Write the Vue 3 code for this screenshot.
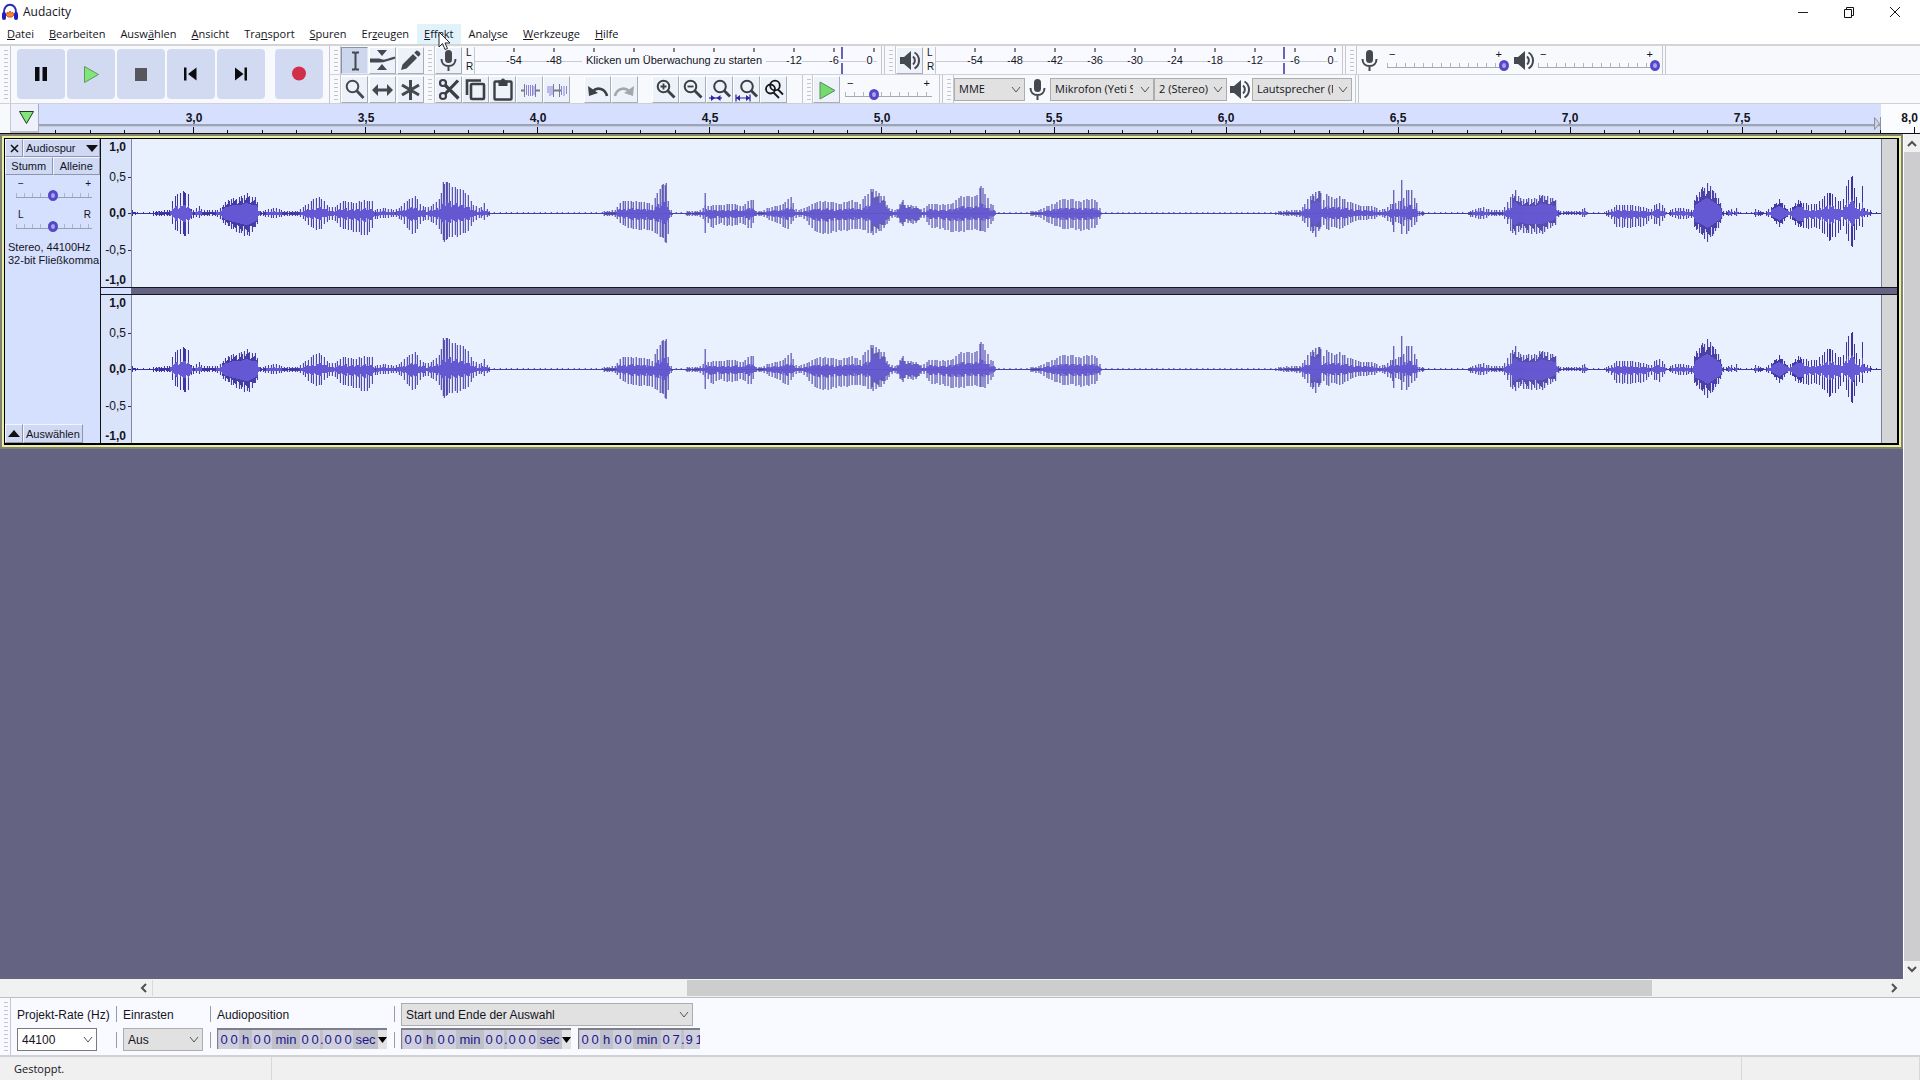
<script setup>
import { ref } from 'vue'

const menus = [
  ['', 'D', 'atei'], ['', 'B', 'earbeiten'], ['Ausw', 'ä', 'hlen'], ['', 'A', 'nsicht'],
  ['Tra', 'n', 'sport'], ['', 'S', 'puren'], ['Er', 'z', 'eugen'], ['', 'E', 'ffekt'],
  ['Anal', 'y', 'se'], ['', 'W', 'erkzeuge'], ['', 'H', 'ilfe'],
]

const mic = '<rect x="9" y="2" width="7" height="13" rx="3.5" fill="#45484f"/><path d="M5.5 11c0 4.500 3 7 7 7s7-2.500 7-7M12.500 18v5" fill="none" stroke="#45484f" stroke-width="2"/>'
const speaker = '<path d="M3 9h4l7-6v19l-7-6H3z" fill="#45484f"/><path d="M16 8.500c2.500 2 2.500 6 0 8M17.500 4.500c6 3.500 6 12.500 0 16" fill="none" stroke="#45484f" stroke-width="2"/>'
const lens = '<circle cx="10.500" cy="9.500" r="5.800" fill="none" stroke="#3c3f46" stroke-width="2"/><path d="M14.500 13.500l7 7" stroke="#3c3f46" stroke-width="2.800"/>'
const lensRight = '<circle cx="13" cy="9.500" r="5.800" fill="none" stroke="#3c3f46" stroke-width="2"/><path d="M17 13.500l6 6" stroke="#3c3f46" stroke-width="2.800"/>'
const icons = {
  mic,
  speaker,
  ibeam: '<path d="M10 4.500h2.500l1 1 1-1H17M10 21.500h2.500l1-1 1 1H17M13.500 5.500v15" fill="none" stroke="#45484f" stroke-width="2"/>',
  envelope: '<path d="M7 2h10l-5 6zM7 22h10l-5-6z" fill="#45484f"/><path d="M0 13.500h9c6 0 8-2 16-4M0 11.500h9l5 1.500" fill="none" stroke="#45484f" stroke-width="2.200"/>',
  pencil: '<path d="M3 22l1.500-5.500L15 6l4 4L8.500 20.500zM16.300 4.700l2-2c1-1 5 2.500 4 4l-2 2z" fill="#45484f"/>',
  magnify: '<circle cx="10.500" cy="9.500" r="5.800" fill="none" stroke="#45484f" stroke-width="2"/><path d="M14.500 13.500l7 7.500" stroke="#45484f" stroke-width="2.800"/>',
  shift: '<path d="M7 13h12" stroke="#45484f" stroke-width="3"/><path d="M2 13l6-6v12zM23 13l-6-6v12z" fill="#45484f"/>',
  multi: '<path d="M12.500 3v20M4 8l17 10M21 8L4 18" stroke="#45484f" stroke-width="3"/>',
  cut: '<g fill="none" stroke="#3c3f46" stroke-width="2.200"><circle cx="7" cy="6" r="3"/><circle cx="7" cy="19" r="3"/></g><path d="M9 8l13.500 13.500M9 17L22 3.500" stroke="#3c3f46" stroke-width="3.200"/>',
  copy: '<rect x="8" y="7" width="13" height="15" rx="1" fill="none" stroke="#3c3f46" stroke-width="2.600"/><path d="M4 18V3.500h14" fill="none" stroke="#3c3f46" stroke-width="2.600"/>',
  paste: '<rect x="4.500" y="4.500" width="17" height="18" rx="1" fill="none" stroke="#3c3f46" stroke-width="2.400"/><path d="M8.500 3.500h2.500a2 2 0 0 1 4 0h2.500V9h-9z" fill="#3c3f46"/>',
  trim: '<path d="M4 13.500h4M18 13.500h5" stroke="#777b88" stroke-width="2"/><path d="M7.500 7v13M18.500 7v13" stroke="#777b88"/><path d="M9.500 18V8M11.500 8v11M13.500 19V8M15.500 8v11M17 18V9" stroke="#8b82de"/>',
  silence: '<path d="M9 13.500h8" stroke="#777b88" stroke-width="2"/><path d="M9.500 7v13M15.500 7v13" stroke="#777b88"/><path d="M4 16V9M6 9v10M8 18V9M17.500 9v9M20 19V9M22.500 9v8" stroke="#8b82de"/>',
  undo: '<path d="M8 14c4-4 12-3 14 5" fill="none" stroke="#3c3f46" stroke-width="2.600"/><path d="M3 9l1 10 9-3z" fill="#3c3f46"/>',
  redo: '<path d="M17 14c-4-4-12-3-14 5" fill="none" stroke="#a4a6ac" stroke-width="2.600"/><path d="M22 9l-1 10-9-3z" fill="#a4a6ac"/>',
  zoomIn: lens + '<path d="M7.500 9.500h6M10.500 6.500v6" stroke="#3c3f46" stroke-width="1.800"/>',
  zoomOut: lens + '<path d="M7.500 9.500h6" stroke="#3c3f46" stroke-width="1.800"/>',
  zoomSel: lensRight + '<path d="M2 21h13" stroke="#2a259c" stroke-width="1.200"/><path d="M8 21l-4-3v6zM9.500 21l4-3v6z" fill="#2a259c"/>',
  zoomFit: lensRight + '<path d="M2 21h14M2 17.500v7M16 17.500v7" stroke="#2a259c" stroke-width="1.200"/><path d="M2 21l4-3v6zM16 21l-4-3v6z" fill="#2a259c"/>',
  zoomToggle: '<g fill="none" stroke="#15161a" stroke-width="1.800"><circle cx="14" cy="8.500" r="4.800"/><path d="M17 12.500l5 5"/><circle cx="9.500" cy="12" r="4.500"/><path d="M12.500 15.500l5.500 5.500"/></g>',
  play: '<path d="M6 5l15 8.500L6 22z" fill="#74dc6c" stroke="#5a8a5a"/>',
}

const transport = [
  { name: 'Pause', art: '<path d="M18 18h4.500v14H18zM25.500 18H30v14h-4.500z" fill="#0c0c10"/>' },
  { name: 'Wiedergabe', art: '<path d="M17.500 17.500l14 8-14 8z" fill="#84e47c" stroke="#5c9a5c"/>' },
  { name: 'Stopp', art: '<path d="M18 19h12v13H18z" fill="#55575c"/>' },
  { name: 'Zum Anfang', art: '<path d="M17 18.500h2.500v13H17zM29.500 18.500v13l-8.500-6.500z" fill="#0c0c10"/>' },
  { name: 'Zum Ende', art: '<path d="M27.500 18.500H30v13h-2.500zM18 18.500v13l8.500-6.500z" fill="#0c0c10"/>' },
  { name: 'Aufnahme', art: '<circle cx="24" cy="24.500" r="7" fill="#d0304a"/>' },
]

const toolRows = [
  [['ibeam', 'Auswahl'], ['envelope', 'Hüllkurve'], ['pencil', 'Zeichnen']],
  [['magnify', 'Zoom'], ['shift', 'Verschieben'], ['multi', 'Multi-Werkzeug']],
]
const editGroups = [
  [['cut', 'Ausschneiden'], ['copy', 'Kopieren'], ['paste', 'Einfügen'], ['trim', 'Zuschneiden'], ['silence', 'Stille']],
  [['undo', 'Rückgängig'], ['redo', 'Wiederherstellen']],
  [['zoomIn', 'Vergrößern'], ['zoomOut', 'Verkleinern'], ['zoomSel', 'Auswahl einpassen'], ['zoomFit', 'Projekt einpassen'], ['zoomToggle', 'Zoom umschalten']],
]

const meterTicks = Array.from({ length: 10 }, (_, i) => `M${39 + i * 40} 1v4`).join('')
const playLevels = [-54, -48, -42, -36, -30, -24, -18, -12, -6]

const seconds = ['3,0', '3,5', '4,0', '4,5', '5,0', '5,5', '6,0', '6,5', '7,0', '7,5', '8,0']
// Ruler ticks: a long one every half second, four short ones between.
let ticks = ''
for (let i = -4; i <= 50; i++) {
  const x = Math.round(154 + i * 34.42)
  ticks += i % 5 === 0 ? `M${x} 0v6` : `M${x} 3v3`
}

const scale = ['1,0', '0,5', '0,0', '-0,5', '-1,0']

// Peak envelope: position, height above and depth below the zero line.
const peaks = [
  0,3,2, 4,1,1, 16,1,1, 24,2,2, 25,2,2, 26,11,7, 27,2,2, 37,3,2, 40,12,10, 44,18,18, 52,22,21, 56,19,20, 59,4,5, 62,2,3, 66,8,4, 70,3,2, 83,3,2, 87,4,4, 93,11,11, 100,15,15, 106,15,18, 114,20,22, 118,17,20, 124,15,13, 126,8,7, 128,2,2, 143,5,4, 153,2,2, 166,2,2,
  171,6,5, 178,11,13, 184,15,16, 188,16,16, 193,11,9, 198,5,5, 203,6,7, 210,12,15, 223,10,17, 233,13,22, 240,11,15, 243,3,5, 250,5,4, 263,3,3, 268,6,5, 274,11,13, 282,18,21, 289,8,8, 295,5,5, 303,10,10, 308,15,16, 311,30,27, 314,32,25, 320,27,22, 328,24,21, 336,18,17, 341,8,8, 348,4,3, 352,10,6, 356,2,2, 363,1,1,
  468,1,1, 483,3,3, 488,11,9, 494,12,13, 503,12,15, 516,10,16, 521,8,16, 524,18,20, 530,28,23, 534,31,28, 536,12,20, 538,4,4, 541,1,2, 565,2,2, 570,4,4, 572,6,6, 573,21,18, 575,7,8, 580,8,14, 588,8,9, 596,9,12, 604,9,11, 610,6,8, 618,14,16, 621,13,9, 624,2,2, 630,2,2, 638,6,6, 648,8,10, 656,13,16, 659,16,10, 663,4,4, 668,3,3,
  673,5,5, 680,9,14, 688,12,20, 698,11,19, 708,9,16, 718,13,16, 728,10,14, 736,20,18, 741,26,20, 748,18,17, 752,17,14, 756,6,8, 761,3,3, 766,4,4, 770,15,14, 773,8,8, 783,7,10, 790,3,3, 794,6,6, 798,10,13, 813,8,15, 821,10,18, 830,18,17, 838,16,16, 844,17,15, 849,27,17, 854,18,18, 859,9,10, 862,8,6, 864,1,1,
  893,1,1, 908,3,3, 915,7,8, 923,10,11, 930,14,15, 938,14,14, 948,12,16, 958,14,15, 964,13,13, 967,6,7, 970,1,1, 1128,1,1, 1138,1,1, 1161,3,2, 1168,3,3, 1172,8,8, 1178,16,16, 1184,22,22, 1188,21,15, 1192,13,11, 1195,18,16, 1203,15,12, 1208,16,16, 1216,12,10, 1226,8,6, 1243,6,5, 1247,3,2, 1253,4,4, 1258,8,8, 1261,10,10, 1262,24,17, 1263,10,8, 1269,12,10, 1270,33,20, 1271,12,10, 1275,24,19, 1280,22,14, 1285,10,8, 1287,2,2, 1298,1,1,
  1335,1,1, 1343,4,4, 1352,6,5, 1358,3,2, 1371,3,2, 1375,9,8, 1380,18,18, 1384,22,22, 1388,15,16, 1396,14,20, 1404,14,19, 1410,19,20, 1416,16,16, 1424,14,10, 1427,3,3, 1429,2,1, 1448,2,1, 1454,6,4, 1456,1,1, 1473,1,1, 1480,4,5, 1485,8,13, 1498,8,14, 1513,6,12, 1519,3,4, 1523,8,10, 1528,11,11, 1534,4,3, 1536,1,1, 1543,5,4, 1553,5,5, 1560,3,4,
  1564,16,16, 1570,24,20, 1576,30,28, 1582,22,20, 1588,14,12, 1591,3,3, 1594,1,1, 1599,5,3, 1602,1,1, 1605,5,2, 1608,1,1, 1622,1,1, 1624,4,3, 1633,1,1, 1640,6,4, 1648,14,13, 1656,4,3, 1661,6,6, 1666,13,13, 1676,9,14, 1686,9,14, 1691,15,18, 1698,21,26, 1704,17,22, 1708,10,18, 1712,14,12, 1717,34,26, 1721,36,34, 1725,16,16, 1729,8,12, 1731,28,13, 1733,5,3, 1738,4,2, 1741,1,1, 1749,1,1,
]
// Stretches where the peaks lie so close that they merge.
const dense = [[90, 125], [766, 788], [740, 756], [1180, 1188], [1382, 1424], [1564, 1590], [1640, 1656], [1661, 1672]]

function buildWave() {
  let outer = ''
  let core = ''
  let k = 0
  for (let x = 0; x < 1750; x++) {
    while (k + 5 < peaks.length && peaks[k + 3] <= x) k += 3
    const last = k + 3 >= peaks.length
    const f = last ? 0 : (x - peaks[k]) / (peaks[k + 3] - peaks[k])
    const up = last ? 1 : peaks[k + 1] + f * (peaks[k + 4] - peaks[k + 1])
    const down = last ? 1 : peaks[k + 2] + f * (peaks[k + 5] - peaks[k + 2])
    const packed = dense.some(([a, b]) => x >= a && x <= b)
    const noise = ((x * 7919) % 13) / 13
    const crest = x % 8 === 0 || x % 8 === 3 || x % 8 === 5 || (up > 20 && f === 0)
    const low = packed ? 0.55 + noise * 0.35 : 0.2 + noise * 0.22
    const top = Math.round(up * (crest ? 0.94 + noise * 0.12 : low))
    const bottom = Math.round(down * (crest ? 1.06 - noise * 0.12 : low))
    const flat = up < 1.5
    outer += flat ? (x * 31) % 17 < 3 ? `M${x} 73v2` : `M${x} 74v1` : `M${x} ${74 - top}v${top + bottom + 1}`
    if (up > 3) {
      const a = Math.min(top, Math.round(up * (packed ? 0.5 : 0.38)))
      const b = Math.min(bottom, Math.round(down * (packed ? 0.5 : 0.38)))
      core += `M${x} ${74 - a}v${a + b + 1}`
    }
  }
  return { outer, core }
}
const wave = buildWave()

const stamp = (sec) => [
  ['0', 'd'], ['0', 'd'], ['h', 'h'], ['0', 'd'], ['0', 'd'], ['min', 'm'],
  [sec[0], 'd'], [sec[1], 'd'], ['.', 'p'], [sec[2], 'd'], [sec[3], 'd'], [sec[4], 'd'], ['sec', 's'],
]
const position = stamp('00000')
const start = stamp('00000')
const end = stamp('07910').slice(0, 11)

const speed = ref(31)
const recVol = ref(100)
const playVol = ref(100)
const gain = ref(48)
const pan = ref(48)
const rate = ref('44100')
</script>

<template>
  <div class="app">
    <header class="title">
      <svg class="logo" width="18" height="18" viewBox="0 0 18 18">
        <path d="M3 10C2 -1 16 -1 15 10" fill="none" stroke="#2a2ab4" stroke-width="2" />
        <path d="M5 12l1.500-3 1 1.500L9 8l1.500 2.500 1-1.500 1.500 3-2 2H7z" fill="#f08a28" stroke="#d8502a" />
        <rect x="1" y="9" width="4" height="8" rx="2" fill="#2020c0" /><rect x="13" y="9" width="4" height="8" rx="2" fill="#2020c0" />
      </svg>
      <h1>Audacity</h1>
      <div class="window-buttons">
        <button aria-label="Minimieren"><svg width="12" height="12"><path d="M1 6.500h10" stroke="#222" /></svg></button>
        <button aria-label="Wiederherstellen"><svg width="12" height="12" fill="none" stroke="#111"><path d="M1.500 3.500h7v8h-7zM3.500 3.500v-2h7v8h-2" /></svg></button>
        <button aria-label="Schließen"><svg width="12" height="12"><path d="M1 1l10 10M11 1L1 11" stroke="#111" /></svg></button>
      </div>
    </header>

    <nav class="menu">
      <button v-for="m in menus" :key="m.join('')" :class="{ hover: m[2] === 'ffekt' }">{{ m[0] }}<u>{{ m[1] }}</u>{{ m[2] }}<svg v-if="m[2] === 'ffekt'" class="pointer" width="13" height="20" viewBox="0 0 13 20"><path d="M1 1v15l3.500-3.500L7 18.500l2.500-1L7 12h5z" fill="#fff" stroke="#222230" /></svg></button>
    </nav>

    <div class="toolbars">
      <section class="transport">
        <i class="grip"></i>
        <div class="transport-buttons">
          <button v-for="b in transport" :key="b.name" :aria-label="b.name"><svg width="48" height="50" v-html="b.art"></svg></button>
        </div>
      </section>
      <section class="tools">
        <div v-for="(row, r) in toolRows" :key="r" class="bar">
          <i class="grip"></i>
          <div class="tool-row">
            <button v-for="(t, i) in row" :key="t[0]" class="tool" :class="{ on: r === 0 && i === 0 }" :aria-label="t[1]"><svg width="25" height="25" v-html="icons[t[0]]"></svg></button>
          </div>
        </div>
      </section>
      <section class="stack">
        <div class="bar">
          <i class="grip"></i>
          <button class="tool" aria-label="Aufnahmepegel"><svg width="25" height="25" v-html="icons.mic"></svg></button>
          <div class="lr"><span>L</span><span>R</span></div>
          <div class="meter">
            <svg class="meter-ticks" width="402" height="6"><path :d="meterTicks" stroke="#111" /></svg>
            <div class="levels">
              <span class="level"><b>-54</b></span><span class="level"><b>-48</b></span>
              <span class="message"><b>Klicken um Überwachung zu starten</b></span>
              <span class="level"><b>-12</b></span><span class="level"><b>-6</b></span><span class="level zero"><b>0</b></span>
            </div>
            <i class="peak"></i>
          </div>
          <i class="end"></i>
          <i class="grip"></i>
          <button class="tool" aria-label="Wiedergabepegel"><svg width="25" height="25" v-html="icons.speaker"></svg></button>
          <div class="lr"><span>L</span><span>R</span></div>
          <div class="meter">
            <svg class="meter-ticks" width="402" height="6"><path :d="meterTicks" stroke="#111" /></svg>
            <div class="levels">
              <span v-for="l in playLevels" :key="l" class="level"><b>{{ l }}</b></span><span class="level zero"><b>0</b></span>
            </div>
            <i class="peak play"></i>
          </div>
          <i class="end"></i>
          <i class="grip"></i>
          <svg class="glyph wide" width="25" height="25" v-html="icons.mic"></svg>
          <label class="slider volume"><span class="signs"><span>−</span><span>+</span></span><input v-model="recVol" type="range" aria-label="Aufnahmelautstärke" /></label>
          <svg class="glyph" width="25" height="25" v-html="icons.speaker"></svg>
          <label class="slider volume"><span class="signs"><span>−</span><span>+</span></span><input v-model="playVol" type="range" aria-label="Wiedergabelautstärke" /></label>
          <i class="end"></i>
        </div>
        <div class="bar">
          <i class="grip"></i>
          <div v-for="(g, n) in editGroups" :key="n" class="edit-group">
            <button v-for="t in g" :key="t[0]" class="tool" :aria-label="t[1]"><svg width="25" height="25" v-html="icons[t[0]]"></svg></button>
          </div>
          <i class="grip edge"></i>
          <button class="tool" aria-label="Mit Geschwindigkeit abspielen"><svg width="25" height="25" v-html="icons.play"></svg></button>
          <label class="slider speed"><span class="signs"><span>−</span><span>+</span></span><input v-model="speed" type="range" aria-label="Geschwindigkeit" /></label>
          <i class="end"></i>
          <i class="grip"></i>
          <span class="combo host"><select aria-label="Audio-Host"><option>MME</option></select><svg width="10" height="6"><path d="M1 0l4 5 4-5" /></svg></span>
          <svg class="glyph" width="25" height="25" v-html="icons.mic"></svg>
          <span class="combo input"><select aria-label="Aufnahmegerät"><option>Mikrofon (Yeti Stereo Microphone)</option></select><svg width="10" height="6"><path d="M1 0l4 5 4-5" /></svg></span>
          <span class="combo channels"><select aria-label="Aufnahmekanäle"><option>2 (Stereo)</option></select><svg width="10" height="6"><path d="M1 0l4 5 4-5" /></svg></span>
          <svg class="glyph" width="25" height="25" v-html="icons.speaker"></svg>
          <span class="combo output"><select aria-label="Wiedergabegerät"><option>Lautsprecher (Realtek Audio)</option></select><svg width="10" height="6"><path d="M1 0l4 5 4-5" /></svg></span>
          <i class="end"></i>
        </div>
      </section>
    </div>

    <div class="ruler">
      <div class="ruler-edge"></div>
      <button class="pin" aria-label="Abspielposition anheften"><svg width="17" height="15"><path d="M1.500 1.500h14l-7 12z" fill="#84e47c" stroke="#1c3c1c" /></svg></button>
      <div class="timeline">
        <div class="region"><svg width="7" height="13"><path d="M.5.5l5 6-5 6zM6.500 0v13" fill="#cdd3dc" stroke="#8a90a0" /></svg></div>
        <div class="tail"></div>
        <div class="marks"><span v-for="s in seconds" :key="s">{{ s }}</span></div>
        <svg class="ticks" width="100%" height="6"><path :d="ticks" transform="translate(0.5 0)" stroke="#111" /></svg>
      </div>
    </div>

    <main class="workspace">
      <div class="tracks">
        <div class="ring">
          <article class="track">
            <aside class="panel">
              <div class="head">
                <button class="close" aria-label="Spur schließen"><svg width="9" height="9"><path d="M1 1l7 7M8 1L1 8" stroke="#111" stroke-width="1.500" /></svg></button>
                <button class="name">Audiospur<svg width="12" height="7"><path d="M0 0h12l-6 7z" fill="#111" /></svg></button>
              </div>
              <div class="head"><button class="half">Stumm</button><button class="half">Alleine</button></div>
              <label class="slider track-slider"><span class="signs"><span>−</span><span>+</span></span><input v-model="gain" type="range" aria-label="Verstärkung" /></label>
              <label class="slider track-slider"><span class="signs"><span>L</span><span>R</span></span><input v-model="pan" type="range" aria-label="Panorama" /></label>
              <p>Stereo, 44100Hz<br />32-bit Fließkomma</p>
              <div class="foot">
                <button class="close" aria-label="Spur einklappen"><svg width="12" height="7"><path d="M0 7h12L6 0z" fill="#111" /></svg></button>
                <button class="select">Auswählen</button>
              </div>
            </aside>
            <div class="channels-view">
              <div v-for="c in 2" :key="c" class="channel">
                <div class="scale"><span v-for="(v, i) in scale" :key="v" :class="['v' + i]">{{ v }}</span></div>
                <div class="clip">
                  <svg width="100%" height="148" viewBox="0 0 1750 148" preserveAspectRatio="none" shape-rendering="crispEdges" fill="none">
                    <path d="M0 74.500h1750" stroke="#7b7cc4" />
                    <g transform="translate(0.5 0)"><path :d="wave.outer" stroke="#3a2fa0" /><path :d="wave.core" stroke="#685bd8" /></g>
                  </svg>
                </div>
                <div class="after"></div>
              </div>
            </div>
          </article>
        </div>
      </div>
      <div class="vscroll">
        <svg width="10" height="7"><path d="M1 6l4-4 4 4" /></svg>
        <div class="vthumb"></div>
        <svg width="10" height="7"><path d="M1 1l4 4 4-4" /></svg>
      </div>
    </main>

    <div class="hscroll">
      <svg width="7" height="10"><path d="M6 1L2 5l4 4" /></svg>
      <div class="htrack"><div class="hthumb"></div></div>
      <svg width="7" height="10"><path d="M1 1l4 4-4 4" /></svg>
    </div>

    <section class="selection">
      <i class="grip"></i>
      <div class="col rate"><label for="rate">Projekt-Rate (Hz)</label><span class="combo white"><input id="rate" v-model="rate" type="text" /><svg width="10" height="6"><path d="M1 0l4 5 4-5" /></svg></span></div>
      <div class="rules"><i></i><i></i></div>
      <div class="col snap"><label for="snap">Einrasten</label><span class="combo"><select id="snap"><option>Aus</option></select><svg width="10" height="6"><path d="M1 0l4 5 4-5" /></svg></span></div>
      <div class="rules"><i></i><i></i></div>
      <div class="col position"><span class="caption">Audioposition</span>
        <div class="time"><span v-for="(p, i) in position" :key="i" :class="p[1]">{{ p[0] }}</span><button aria-label="Format"><svg width="9" height="6"><path d="M0 0h9L4.500 6z" /></svg></button></div>
      </div>
      <div class="rules"><i></i><i></i></div>
      <div class="col range">
        <span class="combo"><select aria-label="Auswahlart"><option>Start und Ende der Auswahl</option></select><svg width="10" height="6"><path d="M1 0l4 5 4-5" /></svg></span>
        <div class="pair">
          <div class="time"><span v-for="(p, i) in start" :key="i" :class="p[1]">{{ p[0] }}</span><button aria-label="Format"><svg width="9" height="6"><path d="M0 0h9L4.500 6z" /></svg></button></div>
          <div class="time cut"><span v-for="(p, i) in end" :key="i" :class="p[1]">{{ p[0] }}</span></div>
        </div>
      </div>
    </section>

    <footer class="status"><span class="state">Gestoppt.</span><span class="info"></span><span class="last"></span></footer>
  </div>
</template>

<style>
body { margin: 0; }
</style>

<style scoped>
* { box-sizing: border-box; }
.app { min-height: 100vh; display: flex; flex-direction: column; background: #fff; color: #14141c; font: 11px/14px "Open Sans", sans-serif; overflow: hidden; }
button, select, input { font: inherit; color: inherit; margin: 0; padding: 0; border: 0; background: none; }
svg { display: block; flex: none; }

.title { display: flex; align-items: center; height: 23px; padding: 0 2px 0 1px; }
.title h1 { margin: 0 auto 0 4px; font-size: 12px; font-weight: 400; }
.window-buttons { display: flex; }
.window-buttons button { width: 46px; height: 22px; display: grid; place-items: center; }
.menu { display: flex; height: 21px; align-items: center; gap: 1px; }
.menu button { position: relative; height: 20px; padding: 0 7px; white-space: nowrap; }
.menu .hover { background: #e2f2fa; }
.pointer { position: absolute; left: 21px; top: 7px; z-index: 3; }

.toolbars { display: flex; height: 60px; border-top: 2px solid #d3d4d6; background: #f8f9fd; }
.grip { flex: none; width: 11px; align-self: stretch; border-right: 1px solid #c6c8d0; background: repeating-linear-gradient(#c4c6cc 0 1px, transparent 1px 4px) 4px 4px / 4px calc(100% - 6px) no-repeat; }
.grip.edge { border-left: 1px solid #c6c8d0; margin-left: 15px; }
.transport { flex: none; display: flex; border-right: 1px solid #c6c8d0; border-bottom: 1px solid #cfd1d8; }
.transport-buttons { display: flex; gap: 2px; padding: 3px 6px 4px 6px; }
.transport-buttons button { width: 48px; height: 50px; border-radius: 4px; background: #d1daf0; }
.transport-buttons button:last-child { margin-left: 8px; }
.tools { flex: none; }
.stack { flex: 1; min-width: 0; }
.bar { display: flex; align-items: center; height: 29px; border-bottom: 1px solid #cfd1d8; }
.tool-row { display: flex; gap: 1px; }
.edit-group { display: flex; flex: none; }
.edit-group + .edit-group { margin-left: 14px; }
.tool { flex: none; width: 27px; height: 27px; border: 1px solid; border-color: #fff #a9adb8 #a9adb8 #fff; background: #edf1fa; }
.tool.on { background: #ccd6ec; border-color: #8c93a8 #e4e8f4 #e4e8f4 #8c93a8; }
.lr { flex: none; width: 12px; padding-left: 4px; font: 10px/14px "Liberation Sans", sans-serif; display: flex; flex-direction: column; }
.meter { position: relative; flex: none; width: 403px; height: 27px; margin-right: 4px; border-left: 1px solid #c6c8d0; background: linear-gradient(#c9cbd2, #c9cbd2) 0 14px / 100% 1px no-repeat #f9faff; }
.meter-ticks { position: absolute; left: 0; top: 0; }
.levels { display: flex; align-items: center; height: 27px; padding-left: 19px; font: 11px/14px "Liberation Sans", sans-serif; white-space: nowrap; }
.levels b { font-weight: 400; background: #f9faff; }
.level { width: 40px; text-align: center; flex: none; }
.level.zero { width: 23px; padding-left: 8px; }
.message { flex: 1; text-align: center; }
.message b { padding: 0 4px; }
.peak { position: absolute; left: 366px; top: 0; width: 2px; height: 27px; background: linear-gradient(#6c61b8 0 12px, transparent 12px 16px, #6c61b8 16px); }
.peak.play { left: 347px; }
.end { flex: none; width: 4px; align-self: stretch; border: solid #c6c8d0; border-width: 0 1px; }
.glyph { width: 25px; }
.glyph.wide { width: 28px; }

.slider { flex: none; display: flex; flex-direction: column; }
.signs { display: flex; justify-content: space-between; font: 11px/10px "Liberation Sans", sans-serif; padding: 0 2px; }
.slider input { appearance: none; width: 100%; height: 13px; background: linear-gradient(#a6a8ae, #a6a8ae) 0 8px / 100% 1px no-repeat, repeating-linear-gradient(90deg, #b4b6bc 0 1px, transparent 1px 9px) 0 4px / 100% 4px no-repeat; }
.slider input::-webkit-slider-thumb { appearance: none; width: 10px; height: 11px; border-radius: 50%; border: 3px solid #5548c8; background: #a9a4ee; }
.volume { width: 122px; margin: 0 2px; }
.volume .signs { padding-right: 7px; }
.volume input { background-size: 116px 1px, 116px 4px; }
.speed { width: 87px; margin: 0 7px 0 5px; }

.combo { position: relative; flex: none; display: block; height: 23px; }
.combo select, .combo input { appearance: none; display: block; width: 100%; height: 100%; padding: 0 20px 0 4px; border: 1px solid #adadad; border-radius: 0; background: #e1e1e1; }
.combo svg { position: absolute; right: 4px; top: 9px; fill: none; stroke: #555; pointer-events: none; }
.combo.white input { background: #fff; border-color: #7a7a7a; }
.host { width: 71px; }
.input { width: 104px; }
.channels { width: 73px; }
.channels select { padding-right: 12px; }
.output { width: 100px; margin-right: 3px; }
.output select { padding-right: 18px; }

.ruler { display: flex; height: 30px; background: #f8f9fd; border-bottom: 1px solid #111; }
.ruler-edge { width: 11px; border-right: 1px solid #c6c8d0; }
.pin { width: 28px; padding-left: 7px; border-right: 1px solid #a9adb8; border-bottom: 2px solid #b8bcc8; background: #eef1fb; }
.timeline { flex: 1; position: relative; display: flex; overflow: hidden; }
.region { flex: 1; display: flex; justify-content: flex-end; align-items: flex-end; padding-bottom: 3px; background: linear-gradient(transparent 20px, #9aa3b8 20px 22px, #c3cbdf 22px 23px, #d3dcf4 23px) #d6e0fe; }
.tail { width: 39px; background: #fbfcff; }
.marks { position: absolute; left: 69px; right: 0; top: 7px; display: flex; font: 700 12px/14px "Liberation Sans", sans-serif; }
.marks span { flex: none; width: 172px; text-align: center; }
.marks span:last-child { flex: 1; width: auto; text-align: right; padding-right: 2px; }
.ticks { position: absolute; left: 0; bottom: 0; }

.workspace { flex: 1; display: flex; background: #646482; }
.tracks { flex: 1; min-width: 0; }
.ring { border: 2px solid #808274; background: #eceea2; padding: 2px; }
.track { display: flex; border: 1px solid #000; border-right-width: 2px; border-bottom-width: 2px; background: #646482; }
.panel { width: 96px; display: flex; flex-direction: column; border-right: 1px solid #111; background: #d5dffe; font: 11px/12px "Liberation Sans", sans-serif; }
.head { display: flex; height: 18px; }
.head button, .foot button { border: 1px solid; border-color: #f2f5ff #8f96ac #8f96ac #f2f5ff; background: #cfd9f3; }
.close { width: 18px; display: grid; place-items: center; }
.name { flex: 1; display: flex; align-items: center; justify-content: space-between; padding: 0 1px 0 2px; }
.half { flex: 1; }
.track-slider { width: 77px; margin: 4px 0 0 11px; }
.track-slider .signs { font-size: 10px; }
.track-slider + .track-slider { margin-top: 8px; }
.track-slider input { background: linear-gradient(#9a9fae, #9a9fae) 0 8px / 76px 1px no-repeat, repeating-linear-gradient(90deg, #aeb4c4 0 1px, transparent 1px 8px) 0 4px / 76px 4px no-repeat; }
.panel p { margin: 8px 0 0 3px; line-height: 13px; white-space: nowrap; }
.foot { display: flex; height: 19px; margin-top: auto; }
.foot .select { width: 60px; overflow: hidden; white-space: nowrap; padding-left: 2px; text-align: left; }
.channels-view { flex: 1; min-width: 0; display: flex; flex-direction: column; gap: 8px; background: linear-gradient(90deg, #d5dffe 30px, transparent 30px); }
.channel { display: flex; height: 148px; box-shadow: 0 1px 0 #16161e; }
.channel + .channel { box-shadow: 0 -1px 0 #16161e; }
.scale { width: 31px; display: flex; flex-direction: column; border-right: 1px solid #8088a4; background: #d9e3fa; font: 12px/14px "Liberation Sans", sans-serif; text-align: right; }
.scale span { display: flex; align-items: center; justify-content: flex-end; padding-right: 5px; }
.scale .v0 { height: 16px; font-weight: 700; }
.scale .v1 { height: 44px; }
.scale .v2 { height: 28px; font-weight: 700; }
.scale .v3 { height: 46px; }
.scale .v4 { height: 14px; font-weight: 700; }
.scale .v1, .scale .v2, .scale .v3 { background: linear-gradient(#333, #333) right center / 3px 1px no-repeat; }
.clip { flex: 1; min-width: 0; background: #eaf1fe; border-right: 1px solid #7c8090; }
.after { width: 15px; background: #d4d5d6; }

.vscroll { width: 17px; display: flex; flex-direction: column; align-items: center; padding: 6px 0; gap: 5px; background: #f0f0f0; border-left: 1px solid #fff; }
.vthumb { flex: 1; width: 16px; background: #cdcdcf; }
.vscroll svg, .hscroll svg { fill: none; stroke: #505050; stroke-width: 2; }
.hscroll { display: flex; align-items: center; gap: 5px; height: 19px; padding: 0 22px 0 140px; background: #f0f1f1; border-bottom: 1px solid #bcbec2; }
.htrack { flex: 1; display: flex; height: 16px; border-left: 1px solid #dadada; }
.htrack::before { content: ""; flex: 534; }
.htrack::after { content: ""; flex: 234; }
.hthumb { flex: 966; background: #cdcdcd; }

.selection { display: flex; height: 59px; background: #f9faff; border-bottom: 2px solid #d0d1d6; font: 12px/16px "Liberation Sans", sans-serif; }
.col { display: flex; flex-direction: column; padding-top: 5px; gap: 2px; white-space: nowrap; }
.col label, .caption { height: 23px; line-height: 24px; }
.rate { width: 105px; padding-left: 6px; }
.rate .combo { width: 80px; }
.snap { width: 93px; padding-left: 6px; }
.snap .combo { width: 80px; }
.rules { width: 1px; display: flex; flex-direction: column; gap: 10px; padding-top: 8px; }
.rules i { height: 16px; background: #9a9ca4; }
.position { width: 183px; padding-left: 6px; }
.range { padding-left: 6px; }
.range > .combo { width: 292px; }
.pair { display: flex; gap: 7px; }
.time { display: flex; width: 170px; height: 21px; padding-left: 1px; border: solid #7d7f8c; border-width: 2px 0 0 1px; background: #bfc0ca; color: #1a1590; font-size: 13px; line-height: 19px; text-align: center; overflow: hidden; }
.time.cut { width: 122px; }
.time span { flex: none; }
.time .d { width: 10px; background: #cfd0dc; }
.time .h { width: 13px; }
.time .m { width: 28px; }
.time .p { width: 3px; }
.time .s { width: 25px; }
.time button { flex: 1; background: #e2e2e4; display: grid; place-items: center; }

.status { display: flex; height: 23px; background: #f0f0f0; line-height: 24px; }
.state { width: 272px; padding-left: 14px; border-right: 1px solid #d8d8d8; }
.info { flex: 1; border-right: 1px solid #d8d8d8; }
.last { width: 178px; border-right: 1px solid #d8d8d8; }
</style>
